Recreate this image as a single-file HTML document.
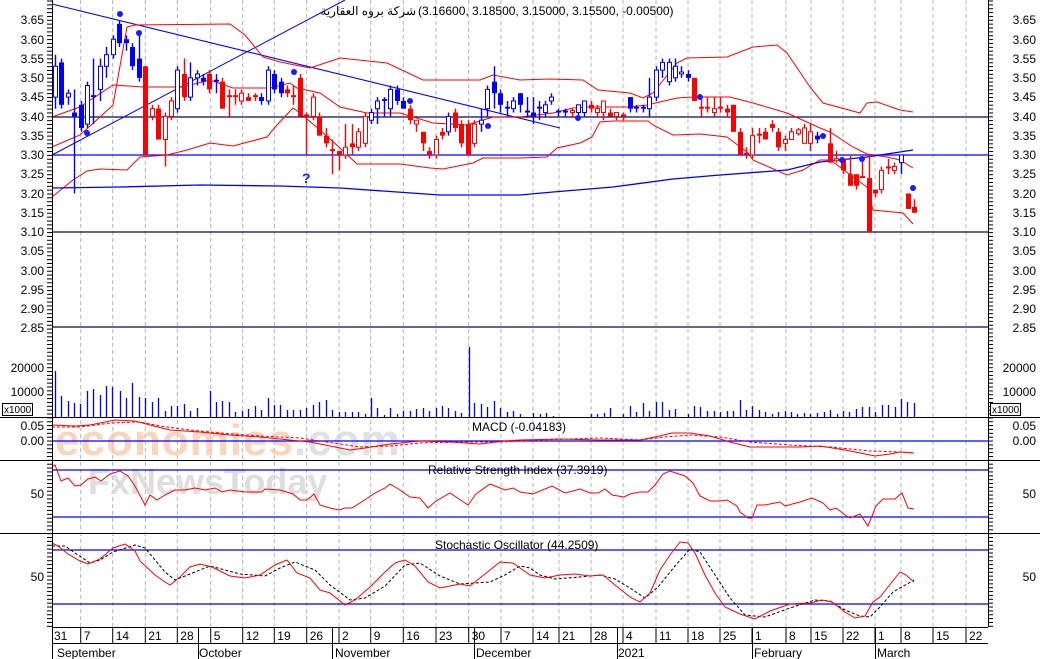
<!DOCTYPE html>
<html><head><meta charset="utf-8"><style>
html,body{margin:0;padding:0;background:#fff;}
svg{display:block;font-family:"Liberation Sans","Noto Sans CJK SC",sans-serif;}
</style></head><body>
<svg id="c" width="1040" height="659" viewBox="0 0 1040 659" xmlns="http://www.w3.org/2000/svg">
<rect width="1040" height="659" fill="#fff"/>
<g id="grid"></g>
<text x="55" y="455" font-size="44" font-weight="bold" fill="#f8c8a8" opacity="0.75" letter-spacing="1">economies<tspan fill="#d8d8d8">.com</tspan></text>
<text x="88" y="494" font-size="36" font-weight="bold" fill="#d6d6d6" opacity="0.8">FxNewsToday</text>
<g id="lines"></g>
<g id="cand"></g>
<g stroke="#000" stroke-width="1">
<line x1="0" y1="417.5" x2="1040" y2="417.5"/>
<line x1="0" y1="460.5" x2="1040" y2="460.5"/>
<line x1="0" y1="533.5" x2="1040" y2="533.5"/>
<line x1="52" y1="627.5" x2="988" y2="627.5"/>
<line x1="52" y1="643.5" x2="988" y2="643.5"/>
<line x1="52.5" y1="0" x2="52.5" y2="659"/>
<line x1="988.5" y1="0" x2="988.5" y2="627"/>
</g>
<g id="ticks" stroke="#000"></g>
<text x="416" y="15" font-size="12" fill="#000" text-anchor="end">شركة بروه العقارية</text>
<text x="418" y="15" font-size="12" fill="#000">(3.16600, 3.18500, 3.15000, 3.15500, -0.00500)</text>
<g font-size="12" fill="#000" text-anchor="end">
<text x="44" y="24">3.65</text><text x="44" y="44">3.60</text><text x="44" y="63">3.55</text><text x="44" y="82">3.50</text><text x="44" y="101">3.45</text><text x="44" y="121">3.40</text><text x="44" y="140">3.35</text><text x="44" y="159">3.30</text><text x="44" y="178">3.25</text><text x="44" y="198">3.20</text><text x="44" y="217">3.15</text><text x="44" y="236">3.10</text><text x="44" y="255">3.05</text><text x="44" y="275">3.00</text><text x="44" y="294">2.95</text><text x="44" y="313">2.90</text><text x="44" y="332">2.85</text>
<text x="44" y="372">20000</text><text x="44" y="396">10000</text>
<text x="44" y="430">0.05</text><text x="44" y="445">0.00</text>
<text x="44" y="498">50</text><text x="44" y="581">50</text>
<text x="1036" y="24">3.65</text><text x="1036" y="44">3.60</text><text x="1036" y="63">3.55</text><text x="1036" y="82">3.50</text><text x="1036" y="101">3.45</text><text x="1036" y="121">3.40</text><text x="1036" y="140">3.35</text><text x="1036" y="159">3.30</text><text x="1036" y="178">3.25</text><text x="1036" y="198">3.20</text><text x="1036" y="217">3.15</text><text x="1036" y="236">3.10</text><text x="1036" y="255">3.05</text><text x="1036" y="275">3.00</text><text x="1036" y="294">2.95</text><text x="1036" y="313">2.90</text><text x="1036" y="332">2.85</text>
<text x="1036" y="372">20000</text><text x="1036" y="396">10000</text>
<text x="1036" y="430">0.05</text><text x="1036" y="445">0.00</text>
<text x="1036" y="498">50</text><text x="1036" y="581">50</text>
</g>
<rect x="2.5" y="403.5" width="30" height="12" fill="#fff" stroke="#000"/>
<text x="4" y="413" font-size="10">x1000</text>
<rect x="990.5" y="403.5" width="30" height="12" fill="#fff" stroke="#000"/>
<text x="992" y="413" font-size="10">x1000</text>
<g font-size="12" fill="#000">
<text x="472" y="431">MACD (-0.04183)</text>
<text x="428" y="474">Relative Strength Index (37.3919)</text>
<text x="435" y="549">Stochastic Oscillator (44.2509)</text>
</g>
<text x="302" y="183" font-size="14" font-weight="bold" fill="#1a1aff">?</text>
<g id="dates" font-size="12" fill="#000"></g>
<g font-size="12" fill="#000">
<text x="57" y="657">September</text><text x="199" y="657">October</text><text x="335" y="657">November</text><text x="476" y="657">December</text><text x="618" y="657">2021</text><text x="754" y="657">February</text><text x="877" y="657">March</text>
</g>
<g stroke="#000">
<line x1="198.5" y1="627" x2="198.5" y2="659"/><line x1="332.5" y1="627" x2="332.5" y2="659"/><line x1="474.5" y1="627" x2="474.5" y2="659"/><line x1="617.5" y1="627" x2="617.5" y2="659"/><line x1="752.5" y1="627" x2="752.5" y2="659"/><line x1="875.5" y1="627" x2="875.5" y2="659"/>
</g>
</svg>
<script>
var NS="http://www.w3.org/2000/svg";
function el(p,t,a){var e=document.createElementNS(NS,t);for(var k in a)e.setAttribute(k,a[k]);document.getElementById(p).appendChild(e);return e;}
function Y(p){return 20+(3.65-p)*385.5;}
var G=[80.7,112.7,145.3,177.3,210.7,242.7,274.3,306.7,339,370.7,403.3,436,468.7,501,533,559,591,623,656,688,720,752,786,811,843,875,901,933,966];
var L=["7","14","21","28","5","12","19","26","2","9","16","23","30","7","14","21","28","4","11","18","25","1","8","15","22","1","8","15","22"];
G.forEach(function(x,i){
 el("grid","line",{x1:x,y1:0,x2:x,y2:627,stroke:"#b4b4b4","stroke-dasharray":"4,3"});
 el("ticks","line",{x1:x,y1:627,x2:x,y2:643});
 var t=el("dates","text",{x:x+3,y:640});t.textContent=L[i];
});
var t0=el("dates","text",{x:54,y:640});t0.textContent="31";
for(var y=1;y<627;y+=3.86){el("ticks","line",{x1:47,y1:y,x2:52,y2:y});el("ticks","line",{x1:988,y1:y,x2:993,y2:y});}
function pl(pts,c,w,d){var s=pts.map(function(p){return p[0]+","+p[1]}).join(" ");var a={points:s,fill:"none",stroke:c,"stroke-width":w||1};if(d)a["stroke-dasharray"]=d;el("lines","polyline",a);}
function hl(y,c){el("lines","line",{x1:52,y1:y,x2:988,y2:y,stroke:c,"stroke-width":1.2});}
hl(117,"#0a0a50");hl(155,"#0000ff");hl(232,"#0a0a50");hl(327,"#0a0a50");
hl(441,"#0000ff");hl(470,"#0000ff");hl(517,"#0000ff");hl(550,"#0000ff");hl(604,"#0000ff");
pl([[52,4],[560,128]],"#0000ff");
pl([[52,155],[345,0]],"#0000ff");
pl([[52,147],[80,135],[100,117],[113,105],[127,27],[135,25],[230,24],[245,35],[263,57],[280,62],[310,68],[340,58],[387,63],[423,80],[480,80],[493,75],[520,80],[550,79],[583,80],[598,90],[630,93],[643,98],[653,93],[677,63],[687,58],[727,57],[753,47],[777,45],[787,53],[810,87],[823,103],[860,113],[867,103],[877,102],[900,110],[913,112]],"#ff0000");
pl([[52,117],[80,107],[113,85],[143,87],[182,87],[210,80],[233,88],[270,88],[290,83],[297,88],[320,93],[340,107],[367,113],[400,113],[433,123],[467,125],[493,117],[520,117],[553,113],[573,108],[587,107],[630,107],[647,105],[677,98],[693,97],[730,97],[753,103],[787,113],[820,128],[830,132],[853,147],[867,154],[887,157],[900,160],[913,168]],"#ff0000");
pl([[52,197],[73,180],[87,171],[100,169],[127,170],[140,157],[167,155],[187,150],[210,143],[233,146],[267,137],[277,125],[293,108],[300,113],[320,130],[340,148],[357,164],[400,164],[430,168],[443,169],[473,163],[483,158],[520,158],[547,157],[557,148],[580,143],[592,137],[600,122],[613,121],[648,121],[653,125],[673,135],[700,134],[727,137],[747,152],[753,160],[787,175],[803,170],[820,160],[830,160],[840,167],[853,177],[867,187],[873,210],[903,213],[913,224]],"#ff0000");
pl([[52,188],[120,187],[200,185],[280,186],[340,188],[440,195],[520,195],[553,192],[613,187],[673,179],[720,175],[787,170],[820,162],[867,157],[900,152],[913,150]],"#0000ff",1.3);
var C=[[55,3.45,3.53,3.42,3.56,"b"],[61,3.43,3.54,3.42,3.55,"B"],[68,3.45,3.46,3.43,3.47,"b"],[74,3.40,3.41,3.20,3.47,"B"],[81,3.37,3.43,3.36,3.44,"B"],[87,3.38,3.48,3.37,3.49,"b"],[93,3.45,3.455,3.38,3.55,"B"],[100,3.47,3.53,3.44,3.55,"b"],[106,3.53,3.56,3.50,3.58,"b"],[113,3.56,3.60,3.55,3.61,"b"],[119,3.59,3.64,3.58,3.65,"B"],[126,3.59,3.60,3.57,3.61,"B"],[132,3.53,3.58,3.52,3.59,"B"],[139,3.50,3.55,3.49,3.61,"B"],[145,3.30,3.53,3.30,3.53,"R"],[152,3.40,3.42,3.39,3.43,"r"],[158,3.34,3.42,3.34,3.43,"R"],[165,3.34,3.40,3.27,3.41,"r"],[171,3.40,3.44,3.39,3.45,"r"],[177,3.42,3.52,3.41,3.53,"b"],[184,3.45,3.51,3.44,3.55,"R"],[190,3.45,3.50,3.44,3.54,"b"],[197,3.50,3.51,3.48,3.52,"b"],[203,3.49,3.50,3.48,3.51,"B"],[209,3.47,3.51,3.46,3.52,"R"],[216,3.49,3.495,3.46,3.51,"B"],[222,3.42,3.49,3.42,3.50,"R"],[229,3.45,3.455,3.40,3.47,"R"],[235,3.45,3.455,3.43,3.47,"R"],[241,3.44,3.46,3.43,3.47,"r"],[248,3.44,3.45,3.44,3.46,"R"],[255,3.45,3.455,3.44,3.46,"R"],[261,3.44,3.45,3.43,3.46,"B"],[268,3.44,3.52,3.43,3.53,"b"],[274,3.47,3.51,3.46,3.52,"B"],[281,3.46,3.49,3.45,3.50,"B"],[287,3.46,3.47,3.45,3.48,"R"],[293,3.45,3.455,3.43,3.48,"R"],[300,3.40,3.50,3.40,3.51,"R"],[306,3.40,3.405,3.30,3.41,"R"],[313,3.40,3.45,3.39,3.46,"r"],[319,3.35,3.40,3.35,3.41,"R"],[326,3.33,3.35,3.32,3.37,"R"],[332,3.31,3.315,3.25,3.34,"R"],[339,3.30,3.31,3.26,3.31,"R"],[345,3.30,3.32,3.29,3.38,"r"],[352,3.32,3.33,3.30,3.38,"R"],[358,3.32,3.36,3.31,3.37,"r"],[365,3.33,3.40,3.32,3.41,"r"],[371,3.39,3.41,3.38,3.42,"b"],[377,3.42,3.44,3.38,3.45,"b"],[384,3.44,3.445,3.40,3.45,"B"],[390,3.42,3.47,3.40,3.48,"b"],[397,3.44,3.47,3.43,3.48,"B"],[403,3.42,3.44,3.42,3.45,"B"],[410,3.39,3.42,3.38,3.43,"R"],[416,3.38,3.39,3.36,3.39,"r"],[423,3.33,3.36,3.31,3.36,"R"],[429,3.30,3.31,3.29,3.32,"R"],[436,3.30,3.34,3.29,3.35,"r"],[442,3.35,3.36,3.34,3.37,"R"],[448,3.36,3.40,3.35,3.41,"b"],[455,3.37,3.41,3.36,3.42,"R"],[461,3.33,3.38,3.32,3.39,"R"],[468,3.30,3.38,3.30,3.39,"R"],[474,3.33,3.38,3.32,3.39,"r"],[481,3.38,3.39,3.36,3.42,"b"],[487,3.42,3.47,3.40,3.48,"b"],[494,3.46,3.49,3.42,3.53,"B"],[500,3.43,3.46,3.41,3.47,"B"],[507,3.42,3.425,3.40,3.44,"B"],[513,3.42,3.44,3.41,3.45,"b"],[520,3.43,3.46,3.41,3.46,"B"],[527,3.41,3.415,3.40,3.45,"B"],[533,3.40,3.41,3.38,3.45,"B"],[539,3.42,3.425,3.39,3.44,"B"],[545,3.41,3.43,3.40,3.44,"b"],[551,3.44,3.45,3.43,3.46,"b"],[558,3.41,3.415,3.40,3.42,"B"],[565,3.41,3.415,3.40,3.42,"B"],[572,3.41,3.415,3.40,3.42,"r"],[578,3.41,3.43,3.40,3.43,"b"],[584,3.41,3.44,3.40,3.44,"b"],[591,3.42,3.43,3.41,3.44,"R"],[597,3.41,3.42,3.40,3.43,"r"],[603,3.41,3.44,3.39,3.44,"r"],[610,3.40,3.41,3.40,3.42,"R"],[616,3.40,3.41,3.39,3.41,"r"],[623,3.40,3.405,3.39,3.41,"R"],[630,3.42,3.45,3.41,3.45,"B"],[636,3.42,3.425,3.41,3.43,"B"],[643,3.42,3.425,3.41,3.43,"B"],[649,3.42,3.45,3.40,3.50,"b"],[656,3.45,3.52,3.44,3.53,"b"],[662,3.52,3.54,3.50,3.55,"b"],[669,3.49,3.54,3.48,3.55,"b"],[675,3.50,3.53,3.49,3.55,"b"],[681,3.51,3.515,3.50,3.53,"b"],[688,3.50,3.51,3.49,3.52,"B"],[694,3.44,3.50,3.44,3.50,"R"],[701,3.42,3.425,3.40,3.45,"R"],[707,3.42,3.425,3.41,3.45,"R"],[714,3.41,3.42,3.40,3.45,"r"],[720,3.42,3.425,3.41,3.45,"R"],[727,3.41,3.42,3.40,3.43,"R"],[733,3.36,3.43,3.36,3.43,"R"],[740,3.30,3.36,3.30,3.37,"R"],[746,3.30,3.305,3.29,3.32,"R"],[752,3.30,3.35,3.29,3.37,"r"],[759,3.35,3.355,3.33,3.37,"R"],[765,3.34,3.36,3.34,3.37,"R"],[772,3.37,3.38,3.36,3.39,"R"],[778,3.32,3.36,3.31,3.37,"R"],[785,3.33,3.34,3.31,3.35,"r"],[791,3.34,3.36,3.34,3.37,"r"],[798,3.355,3.365,3.35,3.37,"r"],[804,3.33,3.37,3.33,3.38,"r"],[810,3.33,3.36,3.31,3.38,"r"],[817,3.34,3.35,3.33,3.36,"B"],[830,3.28,3.33,3.28,3.37,"R"],[836,3.285,3.29,3.28,3.31,"r"],[843,3.26,3.29,3.25,3.29,"R"],[850,3.22,3.25,3.22,3.30,"R"],[856,3.22,3.25,3.21,3.25,"R"],[862,3.24,3.245,3.24,3.29,"R"],[869,3.10,3.24,3.10,3.30,"R"],[875,3.20,3.21,3.19,3.21,"R"],[881,3.21,3.26,3.20,3.27,"r"],[888,3.265,3.27,3.25,3.29,"R"],[894,3.26,3.27,3.25,3.28,"r"],[901,3.28,3.30,3.25,3.30,"b"],[908,3.16,3.20,3.16,3.20,"R"],[914,3.15,3.165,3.15,3.185,"R"]];
C.forEach(function(c){
 var col=(c[5]=="b"||c[5]=="B")?"#0000ff":"#ff0000";var fill=(c[5]=="B"||c[5]=="R");
 el("cand","line",{x1:c[0]+0.5,y1:Y(c[4]),x2:c[0]+0.5,y2:Y(c[3]),stroke:col,"stroke-width":1.4});
 var y1=Y(c[2]),y2=Y(c[1]),h=Math.max(1.5,y2-y1);
 if(fill)el("cand","rect",{x:c[0]-2,y:y1,width:5,height:h,fill:col});
 else el("cand","rect",{x:c[0]-1.5,y:y1,width:4,height:h,fill:"#fff",stroke:col,"stroke-width":1});
});
[[120,14],[139,33],[87,133],[294,72],[410,101],[488,126],[578,118],[700,97],[823,136],[842,160],[862,159],[913,188]].forEach(function(d){el("cand","circle",{cx:d[0],cy:d[1],r:3,fill:"#1a1aff"});});
var V=[[55,371],[61,396],[68,401],[74,403],[80,404],[87,391],[93,389],[100,395],[106,386],[112,387],[120,391],[126,398],[132,383],[139,397],[145,398],[152,402],[158,398],[165,411],[171,406],[177,406],[184,404],[190,411],[197,408],[210,391],[216,402],[222,401],[229,402],[235,412],[242,411],[248,409],[255,406],[261,410],[268,398],[274,405],[280,405],[287,410],[293,410],[300,410],[306,408],[313,405],[319,402],[326,400],[332,410],[339,412],[345,412],[352,412],[358,412],[365,414],[371,398],[377,408],[384,415],[390,408],[397,414],[403,411],[410,411],[416,409],[423,408],[429,411],[436,408],[442,406],[448,408],[455,411],[461,413],[469,347],[474,403],[481,404],[487,407],[494,401],[500,408],[507,412],[513,411],[520,414],[533,413],[540,414],[546,413],[553,416],[591,414],[597,414],[604,413],[610,408],[623,414],[630,406],[636,412],[643,403],[649,411],[656,402],[662,402],[669,410],[675,409],[688,414],[694,406],[700,407],[707,411],[714,411],[720,412],[727,411],[733,411],[740,400],[746,410],[752,406],[759,410],[765,412],[772,414],[778,412],[785,411],[791,412],[797,414],[804,413],[810,414],[817,413],[824,412],[830,410],[837,414],[843,411],[849,412],[856,409],[862,407],[869,407],[875,412],[882,405],[888,405],[895,407],[901,399],[907,402],[914,403]];
V.forEach(function(v){el("cand","line",{x1:v[0]+0.5,y1:v[1],x2:v[0]+0.5,y2:417,stroke:"#0000ff","stroke-width":1.3});});
pl([[52,425],[75,426],[90,425],[115,420],[135,421],[150,425],[170,430],[200,432],[230,435],[260,437],[290,440],[310,442],[330,446],[350,450],[365,448],[390,444],[420,441],[450,442],[480,444],[505,441],[520,440],[560,439],[600,440],[640,440],[655,437],[672,433],[690,433],[710,436],[730,442],[750,447],[780,447],[800,447],[820,446],[845,450],[860,453],[875,456],[890,454],[900,452],[914,453]],"#ff0000");
pl([[52,427],[80,427],[110,423],[140,422],[160,426],[190,430],[220,433],[260,436],[300,438],[340,444],[360,447],[390,446],[420,443],[460,442],[500,442],[540,440],[600,438],[640,440],[665,437],[690,435],[720,437],[750,442],[790,445],[830,447],[870,451],[900,452],[914,453]],"#ff0000",1,"3,2");
pl([[52,467],[55,465],[61,481],[68,478],[75,486],[81,485],[88,479],[95,477],[101,481],[110,474],[120,471],[128,476],[135,486],[145,505],[150,495],[157,500],[165,495],[175,490],[185,490],[195,488],[205,490],[215,488],[222,492],[230,490],[245,492],[262,492],[265,489],[280,490],[293,494],[300,500],[307,500],[314,494],[320,505],[330,508],[339,510],[345,508],[352,508],[360,503],[375,493],[385,488],[390,484],[400,490],[410,497],[420,498],[428,508],[436,501],[450,493],[468,505],[476,494],[490,484],[505,490],[513,488],[520,492],[533,494],[552,486],[565,493],[580,489],[590,493],[598,493],[605,489],[612,495],[624,497],[630,494],[640,492],[648,492],[655,485],[663,474],[670,471],[685,476],[693,483],[700,496],[710,501],[720,501],[727,500],[737,506],[740,512],[748,518],[752,518],[757,505],[765,505],[780,502],[785,506],[800,502],[812,498],[823,503],[830,510],[836,508],[845,515],[850,518],[860,514],[868,526],[876,506],[883,499],[895,499],[902,493],[908,508],[914,509]],"#ff0000");
pl([[52,546],[65,546],[75,553],[90,563],[100,560],[113,552],[135,545],[145,548],[165,572],[175,580],[190,574],[210,566],[240,574],[265,576],[280,568],[295,562],[315,570],[330,585],[350,600],[365,598],[385,586],[405,565],[420,563],[440,576],[460,584],[490,582],[505,575],[520,566],[530,568],[540,575],[555,579],[580,577],[600,575],[615,579],[630,588],[645,598],[658,587],[675,566],[690,549],[700,552],[715,575],[730,598],[745,615],[765,617],[790,608],[815,600],[830,601],[845,610],[860,616],[870,617],[880,607],[893,592],[914,580]],"#000",1,"3,2");
pl([[52,543],[58,546],[68,554],[80,561],[88,564],[100,559],[113,548],[125,544],[135,551],[140,561],[155,575],[165,582],[170,585],[180,577],[190,567],[200,564],[212,567],[230,576],[245,578],[260,575],[275,565],[287,560],[297,573],[310,578],[320,590],[330,593],[345,605],[355,600],[370,587],[385,572],[395,563],[405,560],[415,566],[428,582],[440,588],[450,586],[460,584],[470,586],[485,574],[500,562],[513,563],[520,568],[530,575],[545,578],[560,575],[575,574],[590,576],[603,575],[615,585],[630,597],[640,602],[650,593],[660,570],[670,555],[680,542],[688,543],[695,553],[705,575],[715,593],[725,607],[740,614],[755,619],[770,611],[790,604],[810,603],[822,600],[832,602],[845,612],[855,618],[865,616],[873,602],[880,597],[888,587],[900,572],[906,575],[914,582]],"#ff0000");
</script>
</body></html>
